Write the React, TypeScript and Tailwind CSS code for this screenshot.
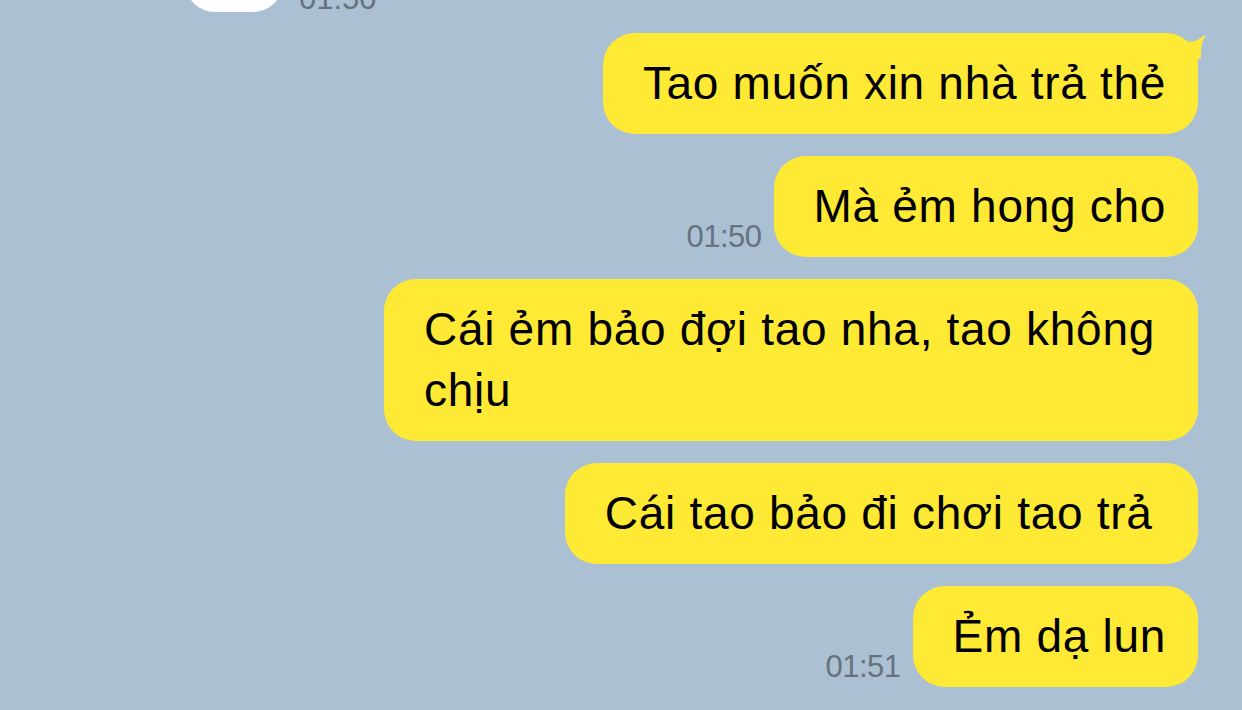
import React from "react";

type Msg = { text: string; time?: string; tail?: boolean };

const messages: Msg[] = [
  { text: "Tao muốn xin nhà trả thẻ", tail: true },
  { text: "Mà ẻm hong cho", time: "01:50" },
  { text: "Cái ẻm bảo đợi tao nha, tao không chịu" },
  { text: "Cái tao bảo đi chơi tao trả\u00a0" },
  { text: "Ẻm dạ lun", time: "01:51" },
];

const Bubble = ({ m }: { m: Msg }) => (
  <div className="flex items-end justify-end gap-[12px]">
    {m.time && (
      <span className="text-[31px] leading-none tracking-[-0.5px] text-[#66737f] mb-[5px]">
        {m.time}
      </span>
    )}
    <div className="relative max-w-[814px] rounded-[32px] bg-[#fee935] pl-[40px] pr-[32px] py-[20px] text-[46px] leading-[61px] tracking-[0.7px] text-black">
      {m.text}
      {m.tail && (
        <svg
          className="absolute right-[-8px] top-[2px]"
          width="22"
          height="24"
          viewBox="0 0 22 24"
        >
          <path d="M0 6 Q10 8 15 4 Q19 1 22 0 Q16 8 17 24 L0 24 Z" fill="#fee935" />
        </svg>
      )}
    </div>
  </div>
);

export default function App() {
  return (
    <div
      className="w-[1242px] h-[710px] overflow-hidden bg-[#abc1d3]"
      style={{ fontFamily: '"Liberation Sans", Arial, sans-serif' }}
    >
      <div className="flex items-end gap-[16px] pl-[185px] -mt-[90px] h-[102px]">
        <div className="w-[98px] h-[102px] rounded-[30px] bg-white" />
        <span className="text-[31px] leading-none text-[#66737f] mb-[-2px]">01:50</span>
      </div>
      <div className="flex flex-col gap-[22px] pr-[44px] pt-[21px]">
        {messages.map((m, i) => (
          <Bubble key={i} m={m} />
        ))}
      </div>
    </div>
  );
}
